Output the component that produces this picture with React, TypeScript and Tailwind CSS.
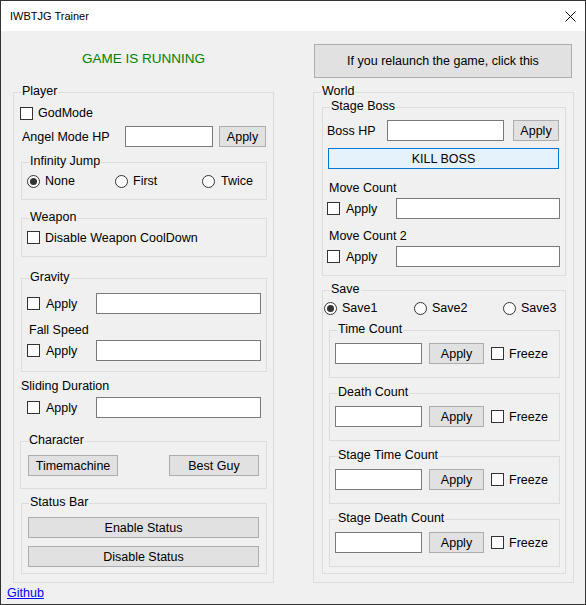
import React from 'react'

type BoxProps = { className?: string; children?: React.ReactNode }

const CheckBox = () => <span className="block h-[13px] w-[13px] shrink-0 border border-[#333333] bg-white" />

const Radio = ({ checked }: { checked?: boolean }) => (
  <span className="flex h-[13px] w-[13px] shrink-0 items-center justify-center rounded-full border border-[#333333] bg-white">
    {checked && <span className="block h-[7px] w-[7px] rounded-full bg-[#333333]" />}
  </span>
)

const TextBox = ({ className = '' }: BoxProps) => (
  <div className={`h-[21px] shrink-0 border border-[#7a7a7a] bg-white ${className}`} />
)

const Button = ({ className = '', children }: BoxProps) => (
  <div className={`flex h-[21px] shrink-0 items-center justify-center border border-[#adadad] bg-[#e1e1e1] ${className}`}>
    {children}
  </div>
)

const GroupBox = ({ title, className = '', children }: BoxProps & { title: string }) => (
  <div className={`relative shrink-0 border border-[#dcdcdc] ${className}`}>
    <span className="absolute -top-[9px] left-[7px] bg-[#f0f0f0] px-[1px] leading-[14px] whitespace-nowrap">{title}</span>
    {children}
  </div>
)

const CheckApplyRow = ({ className = '', boxWidth }: { className?: string; boxWidth: string }) => (
  <div className={`flex h-[21px] items-center ${className}`}>
    <CheckBox />
    <span className="ml-[6px] w-[50px]">Apply</span>
    <TextBox className={boxWidth} />
  </div>
)

const CounterGroup = ({ title }: { title: string }) => (
  <GroupBox title={title} className="ml-[6px] mt-[15px] flex h-[48px] w-[231px] items-start pl-[5px] pt-[12px]">
    <div className="flex h-[21px] items-center">
      <TextBox className="w-[87px]" />
      <Button className="ml-[7px] w-[55px]">Apply</Button>
      <span className="ml-[7px]">
        <CheckBox />
      </span>
      <span className="ml-[5px]">Freeze</span>
    </div>
  </GroupBox>
)

export default function App() {
  return (
    <div className="flex h-[605px] w-[586px] flex-col overflow-hidden border border-[#333333] bg-[#f0f0f0] font-['Liberation_Sans',Arial,sans-serif] text-[12.5px] leading-[14px] text-black">
      <div className="flex h-[30px] shrink-0 items-center justify-between bg-white pl-[9px] pr-[9px]">
        <span className="text-[11px]">IWBTJG Trainer</span>
        <svg width="11" height="11" viewBox="0 0 11 11">
          <path d="M0.5 0.5 L10.5 10.5 M10.5 0.5 L0.5 10.5" stroke="#000" strokeWidth="1" fill="none" />
        </svg>
      </div>

      <div className="flex pl-[12px]">
        {/* left column */}
        <div className="flex w-[261px] flex-col">
          <div className="flex h-[61px] justify-center pt-[20px] text-[13.5px] leading-[16px] text-[#008000]">GAME IS RUNNING</div>
          <GroupBox title="Player" className="flex h-[491px] flex-col pl-[6px]">
            <div className="mt-[10px] flex h-[20px] items-center">
              <CheckBox />
              <span className="ml-[5px]">GodMode</span>
            </div>
            <div className="mt-[3px] flex h-[21px] items-center">
              <span className="ml-[2px] w-[103px]">Angel Mode HP</span>
              <TextBox className="w-[88px]" />
              <Button className="ml-[6px] w-[47px]">Apply</Button>
            </div>

            <GroupBox title="Infinity Jump" className="ml-[1px] mt-[15px] flex h-[38px] w-[246px] items-center pl-[5px]">
              <div className="flex w-[88px] items-center">
                <Radio checked />
                <span className="ml-[5px]">None</span>
              </div>
              <div className="flex w-[87px] items-center">
                <Radio />
                <span className="ml-[5px]">First</span>
              </div>
              <div className="flex items-center">
                <Radio />
                <span className="ml-[6px]">Twice</span>
              </div>
            </GroupBox>

            <GroupBox title="Weapon" className="ml-[1px] mt-[18px] flex h-[39px] w-[246px] items-center pl-[5px]">
              <CheckBox />
              <span className="ml-[5px]">Disable Weapon CoolDown</span>
            </GroupBox>

            <GroupBox title="Gravity" className="ml-[1px] mt-[21px] flex h-[94px] w-[246px] flex-col pl-[5px]">
              <CheckApplyRow className="mt-[14px]" boxWidth="w-[165px]" />
              <span className="ml-[2px] mt-[9px]">Fall Speed</span>
              <CheckApplyRow className="mt-[3px]" boxWidth="w-[165px]" />
            </GroupBox>

            <span className="ml-[1px] mt-[7px]">Sliding Duration</span>
            <CheckApplyRow className="mt-[4px] pl-[7px]" boxWidth="w-[165px]" />

            <GroupBox title="Character" className="mt-[23px] flex h-[48px] w-[247px] items-start justify-between pl-[7px] pr-[7px] pt-[13px]">
              <Button className="w-[90px]">Timemachine</Button>
              <Button className="w-[90px]">Best Guy</Button>
            </GroupBox>

            <GroupBox title="Status Bar" className="ml-[1px] mt-[14px] flex h-[71px] w-[246px] flex-col pl-[6px] pt-[13px]">
              <Button className="w-[231px]">Enable Status</Button>
              <Button className="mt-[8px] w-[231px]">Disable Status</Button>
            </GroupBox>
          </GroupBox>
        </div>

        {/* right column */}
        <div className="ml-[39px] flex w-[261px] flex-col">
          <div className="h-[61px] pt-[13px]">
            <Button className="ml-[1px] h-[34px] w-[258px]">If you relaunch the game, click this</Button>
          </div>
          <GroupBox title="World" className="flex h-[491px] flex-col">
            <GroupBox title="Stage Boss" className="ml-[8px] mt-[14px] flex h-[169px] w-[244px] flex-col">
              <div className="mt-[12px] flex h-[21px] items-center pl-[4px]">
                <span className="w-[60px]">Boss HP</span>
                <TextBox className="w-[117px]" />
                <Button className="ml-[9px] w-[46px]">Apply</Button>
              </div>
              <div className="ml-[5px] mt-[7px] flex h-[21px] w-[231px] items-center justify-center border border-[#0078d7] bg-[#e5f1fb]">
                KILL BOSS
              </div>
              <span className="ml-[6px] mt-[12px]">Move Count</span>
              <CheckApplyRow className="mt-[3px] pl-[4px]" boxWidth="w-[164px]" />
              <span className="ml-[6px] mt-[10px]">Move Count 2</span>
              <CheckApplyRow className="mt-[3px] pl-[4px]" boxWidth="w-[164px]" />
            </GroupBox>

            <GroupBox title="Save" className="ml-[8px] mt-[14px] flex h-[284px] w-[244px] flex-col">
              <div className="mt-[10px] flex h-[14px] items-center pl-[1px]">
                <div className="flex w-[90px] items-center">
                  <Radio checked />
                  <span className="ml-[5px]">Save1</span>
                </div>
                <div className="flex w-[89px] items-center">
                  <Radio />
                  <span className="ml-[5px]">Save2</span>
                </div>
                <div className="flex items-center">
                  <Radio />
                  <span className="ml-[5px]">Save3</span>
                </div>
              </div>
              <CounterGroup title="Time Count" />
              <CounterGroup title="Death Count" />
              <CounterGroup title="Stage Time Count" />
              <CounterGroup title="Stage Death Count" />
            </GroupBox>
          </GroupBox>
        </div>
      </div>

      <a href="#" className="ml-[6px] mt-[3px] w-fit text-[#0000ff] underline">
        Github
      </a>
    </div>
  )
}
